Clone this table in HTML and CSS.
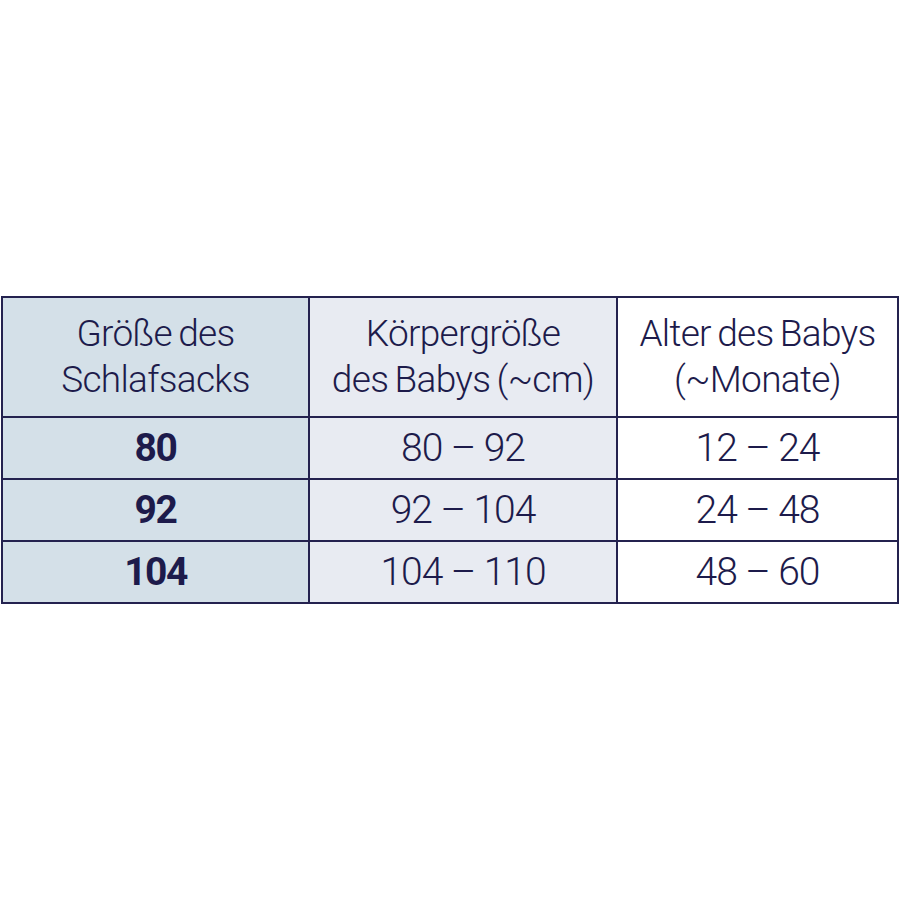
FILE: index.html
```html
<!DOCTYPE html>
<html lang="de">
<head>
<meta charset="utf-8">
<title>Größentabelle</title>
<link rel="stylesheet" href="styles.css">
</head>
<body>
<div class="wrap">
<table class="sizes">
  <colgroup><col class="c1"><col class="c2"><col class="c3"></colgroup>
  <thead>
    <tr>
      <th class="col-a">Größe des<br>Schlafsacks</th>
      <th class="col-b">Körpergröße<br>des Babys (~cm)</th>
      <th class="col-c">Alter des Babys<br>(~Monate)</th>
    </tr>
  </thead>
  <tbody>
    <tr><td class="col-a strong">80</td><td class="col-b">80 – 92</td><td class="col-c">12 – 24</td></tr>
    <tr><td class="col-a strong">92</td><td class="col-b">92 – 104</td><td class="col-c">24 – 48</td></tr>
    <tr><td class="col-a strong">104</td><td class="col-b">104 – 110</td><td class="col-c">48 – 60</td></tr>
  </tbody>
</table>
</div>
</body>
</html>
```
FILE: styles.css
```css
html, body {
  margin: 0;
  padding: 0;
  background: #ffffff;
}
body {
  font-family: Roboto, "Liberation Sans", sans-serif;
  color: #1d1b4b;
}
.wrap {
  padding: 296px 0 0 1px;
}
.sizes {
  border-collapse: collapse;
  table-layout: fixed;
  width: 896px;
}
.c1 { width: 307px; }
.c2 { width: 308px; }
.c3 { width: 281px; }
.sizes th, .sizes td {
  border: 2px solid #24224f;
  text-align: center;
  padding: 0;
}
.sizes th {
  height: 118px;
  font-weight: 300;
  font-size: 37px;
  letter-spacing: -0.7px;
  line-height: 46px;
  word-spacing: -2px;
}
.sizes td {
  height: 60px;
  font-size: 39px;
  font-weight: 300;
  letter-spacing: -1px;
}
.sizes td.strong {
  font-weight: 700;
  letter-spacing: -1.5px;
}
.col-a { background: #d4e0e8; }
.col-b { background: #e8ebf2; }
.col-c { background: #ffffff; }
```
